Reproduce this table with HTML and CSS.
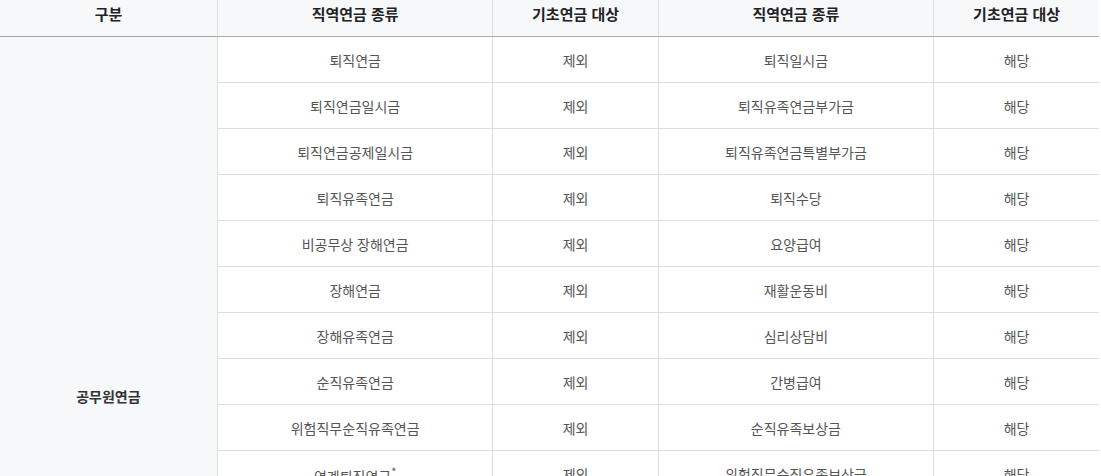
FILE: index.html
```html
<!DOCTYPE html>
<html lang="ko">
<head>
<meta charset="utf-8">
<title>기초연금 대상 직역연금</title>
<link rel="stylesheet" href="styles.css">
</head>
<body>
<table class="pension">
  <colgroup>
    <col class="c-group">
    <col class="c-kind">
    <col class="c-target">
    <col class="c-kind">
    <col class="c-target">
  </colgroup>
  <thead>
    <tr>
      <th>구분</th>
      <th>직역연금 종류</th>
      <th>기초연금 대상</th>
      <th>직역연금 종류</th>
      <th>기초연금 대상</th>
    </tr>
  </thead>
  <tbody>
    <tr>
      <th class="group" rowspan="15">공무원연금</th>
      <td>퇴직연금</td><td>제외</td><td>퇴직일시금</td><td>해당</td>
    </tr>
    <tr><td>퇴직연금일시금</td><td>제외</td><td>퇴직유족연금부가금</td><td>해당</td></tr>
    <tr><td>퇴직연금공제일시금</td><td>제외</td><td>퇴직유족연금특별부가금</td><td>해당</td></tr>
    <tr><td>퇴직유족연금</td><td>제외</td><td>퇴직수당</td><td>해당</td></tr>
    <tr><td>비공무상 장해연금</td><td>제외</td><td>요양급여</td><td>해당</td></tr>
    <tr><td>장해연금</td><td>제외</td><td>재활운동비</td><td>해당</td></tr>
    <tr><td>장해유족연금</td><td>제외</td><td>심리상담비</td><td>해당</td></tr>
    <tr><td>순직유족연금</td><td>제외</td><td>간병급여</td><td>해당</td></tr>
    <tr><td>위험직무순직유족연금</td><td>제외</td><td>순직유족보상금</td><td>해당</td></tr>
    <tr><td>연계퇴직연금<sup>*</sup></td><td>제외</td><td>위험직무순직유족보상금</td><td>해당</td></tr>
    <tr><td>연계퇴직유족연금<sup>*</sup></td><td>제외</td><td>장해일시금</td><td>해당</td></tr>
    <tr><td>연계퇴직연금일시금<sup>*</sup></td><td>제외</td><td>비공무상 장해일시금</td><td>해당</td></tr>
    <tr><td>퇴직유족일시금</td><td>제외</td><td>재난부조금</td><td>해당</td></tr>
    <tr><td>순직유족연금일시금</td><td>제외</td><td>사망조위금</td><td>해당</td></tr>
    <tr><td>연계퇴직유족연금일시금<sup>*</sup></td><td>제외</td><td>부조급여</td><td>해당</td></tr>
  </tbody>
</table>
</body>
</html>
```

FILE: styles.css
```css
html, body {
  margin: 0;
  padding: 0;
  background: #ffffff;
}

body {
  font-family: "Noto Sans CJK KR", "Noto Sans", sans-serif;
  color: #555555;
}

.pension {
  width: 1099px;
  border-collapse: collapse;
  table-layout: fixed;
  font-size: 14px;
}

.c-group { width: 217px; }
.c-kind { width: 275px; }
.c-target { width: 165px; }

.pension th,
.pension td {
  border: 1px solid #dddddd;
  text-align: center;
  vertical-align: middle;
  padding: 0;
  line-height: 20px;
}

.pension tr > :first-child { border-left: 0; }
.pension tr > :last-child { border-right: 0; }

.pension thead th {
  background: #f7f8fa;
  color: #222222;
  font-size: 15px;
  font-weight: 700;
  height: 28px;
  padding-bottom: 8px;
  border-top: 0;
  border-bottom: 1px solid #aaaaaa;
}

.pension tbody td {
  height: 45px;
}

.pension tbody th.group {
  background: #f7f8fa;
  color: #333333;
  font-weight: 700;
  border-left: 0;
  padding-top: 28px;
}

.pension sup {
  font-size: 11px;
  vertical-align: super;
}
```
